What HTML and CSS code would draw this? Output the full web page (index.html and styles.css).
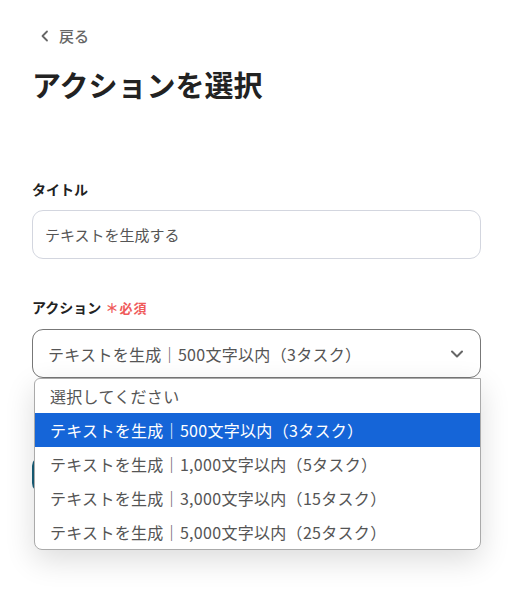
FILE: index.html
```html
<!DOCTYPE html>
<html lang="ja">
<head>
    <meta charset="UTF-8">
    <meta name="viewport" content="width=device-width, initial-scale=1.0">
    <title>アクションを選択</title>
    <link rel="stylesheet" href="styles.css">
</head>
<body>
    <div class="page">
        <a class="back" href="#">
            <svg class="back-icon" width="10" height="12" viewBox="0 0 10 12"><path d="M7 1.5 L2.5 6 L7 10.5" fill="none" stroke="#666" stroke-width="1.8" stroke-linecap="round" stroke-linejoin="round"/></svg>
            <span>戻る</span>
        </a>
        <h1 class="title">アクションを選択</h1>

        <div class="field field-title">
            <label class="label">タイトル</label>
            <div class="input">テキストを生成する</div>
        </div>

        <div class="field field-action">
            <label class="label">アクション <span class="required">＊必須</span></label>
            <div class="select-wrap">
                <div class="select">
                    <span>テキストを生成｜500文字以内（3タスク）</span>
                    <svg class="chevron" width="14" height="10" viewBox="0 0 14 10"><path d="M2 2.5 L7 7.5 L12 2.5" fill="none" stroke="#666" stroke-width="2" stroke-linecap="round" stroke-linejoin="round"/></svg>
                </div>
                <ul class="options">
                    <li>選択してください</li>
                    <li class="active">テキストを生成｜500文字以内（3タスク）</li>
                    <li>テキストを生成｜1,000文字以内（5タスク）</li>
                    <li>テキストを生成｜3,000文字以内（15タスク）</li>
                    <li>テキストを生成｜5,000文字以内（25タスク）</li>
                </ul>
            </div>
        </div>

        <!-- covered by the open dropdown -->
        <button class="next" aria-label="次へ"></button>
    </div>
</body>
</html>
```

FILE: styles.css
```css
html, body { min-height: 594px; }
body {
    margin: 0;
    background: #fff;
    font-family: "Noto Sans CJK JP", "Noto Sans", sans-serif;
    color: #222;
}
.page { padding: 24px 39px 120px 32px; }

.back {
    display: flex;
    align-items: center;
    gap: 9px;
    padding-left: 8px;
    color: #666;
    text-decoration: none;
    font-size: 15px;
    font-weight: 500;
    line-height: 24px;
}
.back-icon { display: block; }

.title {
    margin: 14px 0 0;
    font-size: 29px;
    font-weight: 700;
    line-height: 44px;
    color: #222;
}

.field-title { margin-top: 73px; }
.field-action { margin-top: 38px; }

.label {
    display: block;
    font-size: 14px;
    font-weight: 700;
    line-height: 20px;
    color: #222;
    margin-bottom: 11px;
}
.required {
    color: #ef5b5b;
    font-size: 13px;
    letter-spacing: 1px;
    margin-left: 1px;
}

.input {
    height: 47px;
    border: 1px solid #d3d6df;
    border-radius: 11px;
    padding: 0 12px;
    display: flex;
    align-items: center;
    font-size: 15px;
    color: #555;
}

.select-wrap { position: relative; }
.select {
    height: 47px;
    border: 1px solid #777;
    border-radius: 11px;
    padding: 0 16px 0 15px;
    display: flex;
    align-items: center;
    justify-content: space-between;
    font-size: 16px;
    letter-spacing: 0.3px;
    color: #555;
}
.chevron { display: block; }

.options {
    position: absolute;
    top: 49px;
    left: 2px;
    right: 0;
    margin: 0;
    padding: 0;
    list-style: none;
    background: #fff;
    border: 1px solid #aaa;
    border-radius: 6px 0 8px 8px;
    box-shadow: 0 10px 30px rgba(0, 0, 0, 0.14);
    z-index: 2;
}
.options li {
    height: 34px;
    line-height: 34px;
    padding-left: 15px;
    font-size: 16px;
    letter-spacing: 0.3px;
    color: #555;
}
.options li.active {
    background: #1565d8;
    color: #fff;
}

.next {
    display: block;
    width: 100%;
    height: 37px;
    margin-top: 78px;
    border: none;
    border-radius: 10px;
    background: #175e78;
}
```
